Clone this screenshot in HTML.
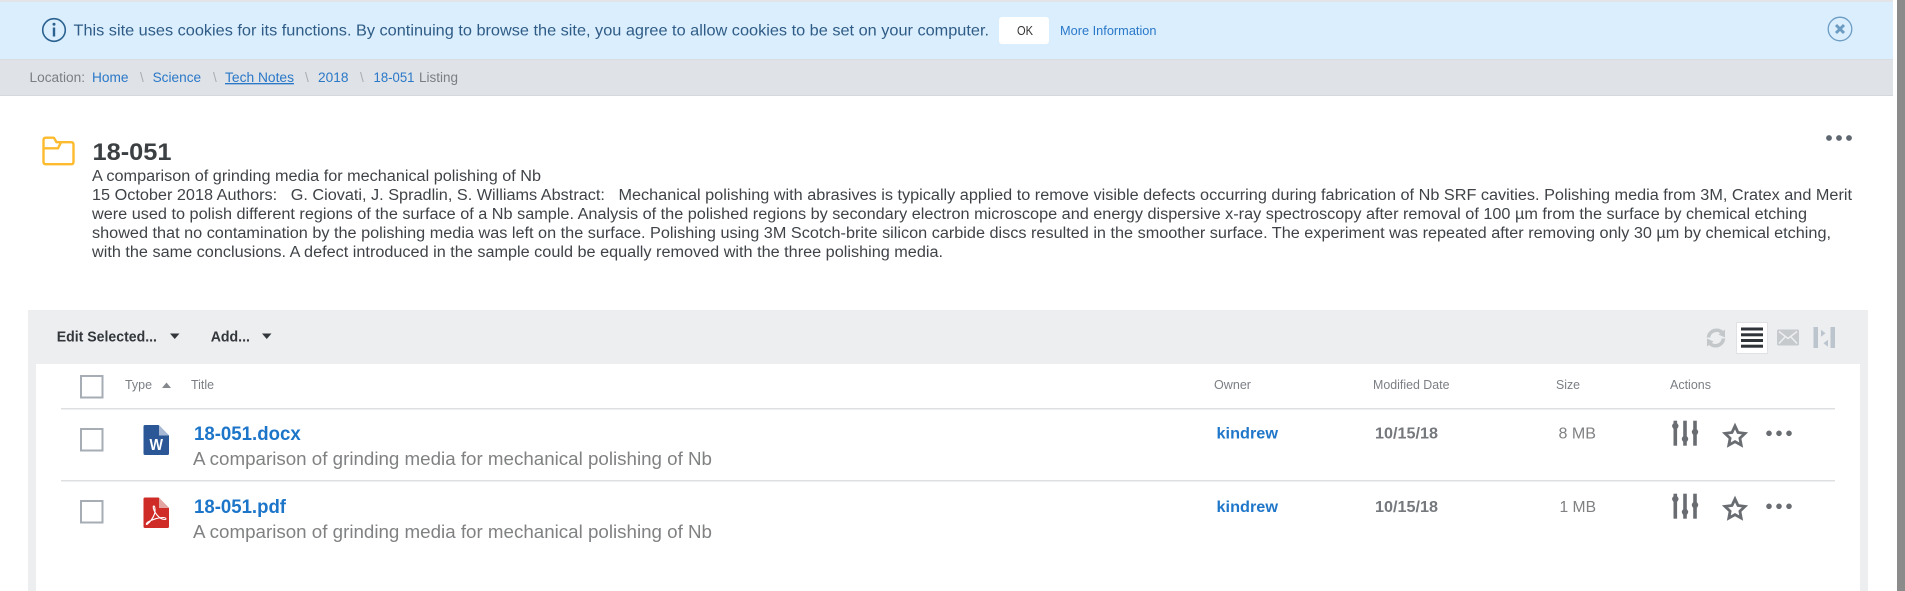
<!DOCTYPE html>
<html lang="en">
<head>
<meta charset="utf-8">
<title>18-051 Listing</title>
<style>
html,body{margin:0;padding:0;width:1905px;height:591px;overflow:hidden;background:#fff}
svg{display:block;position:absolute;left:0;top:0}
text{font-family:"Liberation Sans",Arial,sans-serif;white-space:pre}
.p{font-size:15.3px;fill:#3f4347}
.h{font-size:13px;fill:#7b7f84}
.b{font-size:13.5px;fill:#7b7f84}
.l{fill:#2a78c8}
.f{font-size:19px;font-weight:bold;fill:#1c75c9}
.d{font-size:18px;fill:#7f8183}
.o{font-size:15.5px;font-weight:bold;fill:#2077c9}
.m{font-size:15.5px;font-weight:bold;fill:#75787c}
.s{font-size:16px;fill:#7f8183}
.t{font-size:14.5px;font-weight:bold;fill:#33373b}
.cb{fill:#fff;stroke:#a6adb4;stroke-width:2}
.ac{fill:#696d72}
</style>
</head>
<body>
<svg width="1905" height="591" viewBox="0 0 1905 591" xmlns="http://www.w3.org/2000/svg">
  <!-- scrollbar -->
  <rect x="1897" y="0" width="8" height="591" fill="#8b8b8b"/>
  <!-- banner -->
  <rect x="0" y="0" width="1893" height="2" fill="#e2e4e8"/>
  <rect x="0" y="2" width="1893" height="57" fill="#daeefe"/>
  <circle cx="54" cy="30" r="11.3" fill="none" stroke="#2c628f" stroke-width="1.6"/>
  <circle cx="54" cy="24.3" r="1.5" fill="#2c628f"/>
  <rect x="52.8" y="27.5" width="2.4" height="9" fill="#2c628f"/>
  <text x="73.5" y="35.5" font-size="16" fill="#2f5c86" textLength="915.5" lengthAdjust="spacingAndGlyphs">This site uses cookies for its functions. By continuing to browse the site, you agree to allow cookies to be set on your computer.</text>
  <rect x="999" y="17" width="50" height="27" rx="3" fill="#fff"/>
  <text x="1017" y="35" font-size="12.5" fill="#333" textLength="16" lengthAdjust="spacingAndGlyphs">OK</text>
  <text x="1060" y="35" font-size="13" class="l" textLength="96.5" lengthAdjust="spacingAndGlyphs">More Information</text>
  <circle cx="1840" cy="29" r="11.8" fill="none" stroke="#6d9cc3" stroke-width="1.3"/>
  <path d="M1836 25l8 8M1844 25l-8 8" stroke="#6d9cc3" stroke-width="3" fill="none"/>
  <!-- breadcrumb -->
  <rect x="0" y="59" width="1893" height="37" fill="#dfe2e6"/>
  <rect x="0" y="59" width="1893" height="1" fill="#d9dde0"/>
  <rect x="0" y="95" width="1893" height="1" fill="#d5d8dc"/>
  <text x="29.5" y="82" class="b" textLength="55.5" lengthAdjust="spacingAndGlyphs">Location:</text>
  <text x="92" y="82" class="b l" textLength="36.5" lengthAdjust="spacingAndGlyphs">Home</text>
  <text x="140" y="82" class="b" style="fill:#a9adb1">\</text>
  <text x="152.6" y="82" class="b l" textLength="48.5" lengthAdjust="spacingAndGlyphs">Science</text>
  <text x="213" y="82" class="b" style="fill:#a9adb1">\</text>
  <text x="225" y="82" class="b l" textLength="69" lengthAdjust="spacingAndGlyphs" text-decoration="underline">Tech Notes</text>
  <text x="305" y="82" class="b" style="fill:#a9adb1">\</text>
  <text x="318" y="82" class="b l" textLength="30.5" lengthAdjust="spacingAndGlyphs">2018</text>
  <text x="360" y="82" class="b" style="fill:#a9adb1">\</text>
  <text x="373.5" y="82" class="b l" textLength="41" lengthAdjust="spacingAndGlyphs">18-051</text>
  <text x="419" y="82" class="b" textLength="39" lengthAdjust="spacingAndGlyphs">Listing</text>
  <!-- heading -->
  <path d="M46 137.700h7q1 0 1.500 1l2 3.500h14.500q2.500 0 2.500 2.500v17q0 2.500-2.500 2.500h-25q-2.500 0-2.500-2.500v-21.500q0-2.500 2.500-2.500zM44 148.300h14l3-6" fill="none" stroke="#fdbb2d" stroke-width="2.400" stroke-linejoin="round"/>
  <text x="92.500" y="160" font-size="24" font-weight="bold" fill="#3c4043" textLength="79" lengthAdjust="spacingAndGlyphs">18-051</text>
  <text x="92" y="181" class="p" textLength="449" lengthAdjust="spacingAndGlyphs">A comparison of grinding media for mechanical polishing of Nb</text>
  <text x="92" y="200" class="p" textLength="1760" lengthAdjust="spacingAndGlyphs">15 October 2018 Authors:   G. Ciovati, J. Spradlin, S. Williams Abstract:   Mechanical polishing with abrasives is typically applied to remove visible defects occurring during fabrication of Nb SRF cavities. Polishing media from 3M, Cratex and Merit</text>
  <text x="92" y="219" class="p" textLength="1715" lengthAdjust="spacingAndGlyphs">were used to polish different regions of the surface of a Nb sample. Analysis of the polished regions by secondary electron microscope and energy dispersive x-ray spectroscopy after removal of 100 µm from the surface by chemical etching</text>
  <text x="92" y="238" class="p" textLength="1739" lengthAdjust="spacingAndGlyphs">showed that no contamination by the polishing media was left on the surface. Polishing using 3M Scotch-brite silicon carbide discs resulted in the smoother surface. The experiment was repeated after removing only 30 µm by chemical etching,</text>
  <text x="92" y="257" class="p" textLength="851" lengthAdjust="spacingAndGlyphs">with the same conclusions. A defect introduced in the sample could be equally removed with the three polishing media.</text>
  <circle cx="1829" cy="138" r="2.900" fill="#5f6770"/>
  <circle cx="1839" cy="138" r="2.900" fill="#5f6770"/>
  <circle cx="1849" cy="138" r="2.900" fill="#5f6770"/>
  <!-- panel -->
  <rect x="28" y="310" width="1840" height="281" fill="#eceef0"/>
  <rect x="36" y="364" width="1824" height="227" fill="#fff"/>
  <text x="56.700" y="341.500" class="t" textLength="100.300" lengthAdjust="spacingAndGlyphs">Edit Selected...</text>
  <path d="M170 333.500h9.500l-4.750 5.500z" fill="#33373b"/>
  <text x="210.700" y="341.500" class="t" textLength="39.300" lengthAdjust="spacingAndGlyphs">Add...</text>
  <path d="M262 333.500h9.500l-4.750 5.500z" fill="#33373b"/>
  <!-- toolbar icons -->
  <path d="M1722.500 333a8 8 0 0 0-14 4.500M1709.500 343a8 8 0 0 0 14-4.500" fill="none" stroke="#c4c7c9" stroke-width="3.600"/>
  <path d="M1718.500 334.500l6.500 3v-8zM1713.500 341.500l-6.500-3v8z" fill="#c4c7c9"/>
  <rect x="1736.500" y="322.500" width="31" height="31" fill="#fff" stroke="#dfe1e4"/>
  <rect x="1741" y="327.500" width="22" height="3" fill="#2f3438"/>
  <rect x="1741" y="333.300" width="22" height="3" fill="#2f3438"/>
  <rect x="1741" y="339" width="22" height="3" fill="#2f3438"/>
  <rect x="1741" y="344.700" width="22" height="3" fill="#2f3438"/>
  <rect x="1777" y="329.500" width="22" height="16" rx="1.500" fill="#c6cacd"/>
  <path d="M1779 331.500l9 7 9-7M1779 343.500l6-6.500M1797 343.500l-6-6.500" fill="none" stroke="#eceef0" stroke-width="1.600"/>
  <rect x="1813.500" y="327" width="4.500" height="21" fill="#bcc4cd"/>
  <rect x="1830.500" y="327" width="4.500" height="21" fill="#bcc4cd"/>
  <path d="M1821 329.800v7l4.500-3.500zM1828 339.800v7l-4.500-3.500z" fill="#bcc4cd"/>
  <!-- header -->
  <rect x="81" y="376" width="21.500" height="21.500" class="cb"/>
  <text x="125" y="389" class="h" textLength="27" lengthAdjust="spacingAndGlyphs">Type</text>
  <path d="M162 388l4.500-5.500 4.500 5.500z" fill="#85898d"/>
  <text x="191" y="389" class="h" textLength="23" lengthAdjust="spacingAndGlyphs">Title</text>
  <text x="1214" y="389" class="h" textLength="37" lengthAdjust="spacingAndGlyphs">Owner</text>
  <text x="1373" y="389" class="h" textLength="76.500" lengthAdjust="spacingAndGlyphs">Modified Date</text>
  <text x="1556" y="389" class="h" textLength="24" lengthAdjust="spacingAndGlyphs">Size</text>
  <text x="1670" y="389" class="h" textLength="41" lengthAdjust="spacingAndGlyphs">Actions</text>
  <rect x="61" y="408" width="1774" height="1.500" fill="#dedfe1"/>
  <!-- row 1 -->
  <rect x="81" y="429" width="21.500" height="21.500" class="cb"/>
  <path d="M145 425h13.500l10.500 10.500v18q0 1.500-1.500 1.500h-22.500q-1.500 0-1.500-1.500v-27q0-1.500 1.500-1.500z" fill="#2b5797"/>
  <path d="M159 425l10 10.500h-10z" fill="#a6b8d4"/>
  <text x="149.500" y="450" font-size="16" font-weight="bold" fill="#fff" textLength="13.500" lengthAdjust="spacingAndGlyphs">W</text>
  <text x="194" y="440" class="f" textLength="106.700" lengthAdjust="spacingAndGlyphs">18-051.docx</text>
  <text x="193" y="465" class="d" textLength="519" lengthAdjust="spacingAndGlyphs">A comparison of grinding media for mechanical polishing of Nb</text>
  <text x="1216.500" y="438.500" class="o" textLength="61.500" lengthAdjust="spacingAndGlyphs">kindrew</text>
  <text x="1375" y="438.500" class="m" textLength="63" lengthAdjust="spacingAndGlyphs">10/15/18</text>
  <text x="1558.500" y="438.500" class="s" textLength="37.500" lengthAdjust="spacingAndGlyphs">8 MB</text>
  <g class="ac">
    <rect x="1673.500" y="420.700" width="3.600" height="25"/><rect x="1683.200" y="420.700" width="3.600" height="25"/><rect x="1693.200" y="420.700" width="3.600" height="25"/>
    <ellipse cx="1675.300" cy="426" rx="3.200" ry="3.200"/><ellipse cx="1685" cy="439" rx="3.200" ry="3.200"/><ellipse cx="1695" cy="432" rx="3.200" ry="3.200"/>
  </g>
  <path d="M1735 426l3 6.500 7 .9-5.100 4.800 1.300 6.900-6.200-3.500-6.200 3.500 1.300-6.900-5.100-4.800 7-.9z" fill="none" stroke="#696d72" stroke-width="2.800"/>
  <circle cx="1769" cy="433.300" r="2.800" class="ac"/><circle cx="1779" cy="433.300" r="2.800" class="ac"/><circle cx="1789" cy="433.300" r="2.800" class="ac"/>
  <rect x="61" y="480" width="1774" height="1.500" fill="#dedfe1"/>
  <!-- row 2 -->
  <rect x="81" y="501" width="21.500" height="21.500" class="cb"/>
  <path d="M145 497.500h13.500l10.500 10.500v18.500q0 1.500-1.500 1.500h-22.500q-1.500 0-1.500-1.500v-27.500q0-1.500 1.500-1.500z" fill="#cf2b27"/>
  <path d="M159 497.500l10 10.500h-10z" fill="#e3a5a2"/>
  <path d="M147 524.500c3-2.500 6-6.500 7.500-10.500 1-3 .5-7.500-.5-8-1.500-.5-1 4 3 9 2 2.500 5 4.500 8 4.500 1.500 0 1.500-2-2-2-4 0-11 2-15 4.500-2 1.500-2 2.500-1 2.500z" fill="none" stroke="#fff" stroke-width="1.100"/>
  <text x="194" y="513" class="f" textLength="92" lengthAdjust="spacingAndGlyphs">18-051.pdf</text>
  <text x="193" y="538" class="d" textLength="519" lengthAdjust="spacingAndGlyphs">A comparison of grinding media for mechanical polishing of Nb</text>
  <text x="1216.500" y="512" class="o" textLength="61.500" lengthAdjust="spacingAndGlyphs">kindrew</text>
  <text x="1375" y="512" class="m" textLength="63" lengthAdjust="spacingAndGlyphs">10/15/18</text>
  <text x="1559.500" y="512" class="s" textLength="36.500" lengthAdjust="spacingAndGlyphs">1 MB</text>
  <g class="ac" transform="translate(0 73)">
    <rect x="1673.500" y="420.700" width="3.600" height="25"/><rect x="1683.200" y="420.700" width="3.600" height="25"/><rect x="1693.200" y="420.700" width="3.600" height="25"/>
    <ellipse cx="1675.300" cy="426" rx="3.200" ry="3.200"/><ellipse cx="1685" cy="439" rx="3.200" ry="3.200"/><ellipse cx="1695" cy="432" rx="3.200" ry="3.200"/>
  </g>
  <path transform="translate(0 73)" d="M1735 426l3 6.500 7 .9-5.100 4.800 1.300 6.900-6.200-3.500-6.200 3.500 1.300-6.900-5.100-4.800 7-.9z" fill="none" stroke="#696d72" stroke-width="2.800"/>
  <circle cx="1769" cy="506.300" r="2.800" class="ac"/><circle cx="1779" cy="506.300" r="2.800" class="ac"/><circle cx="1789" cy="506.300" r="2.800" class="ac"/>
</svg>
</body>
</html>
